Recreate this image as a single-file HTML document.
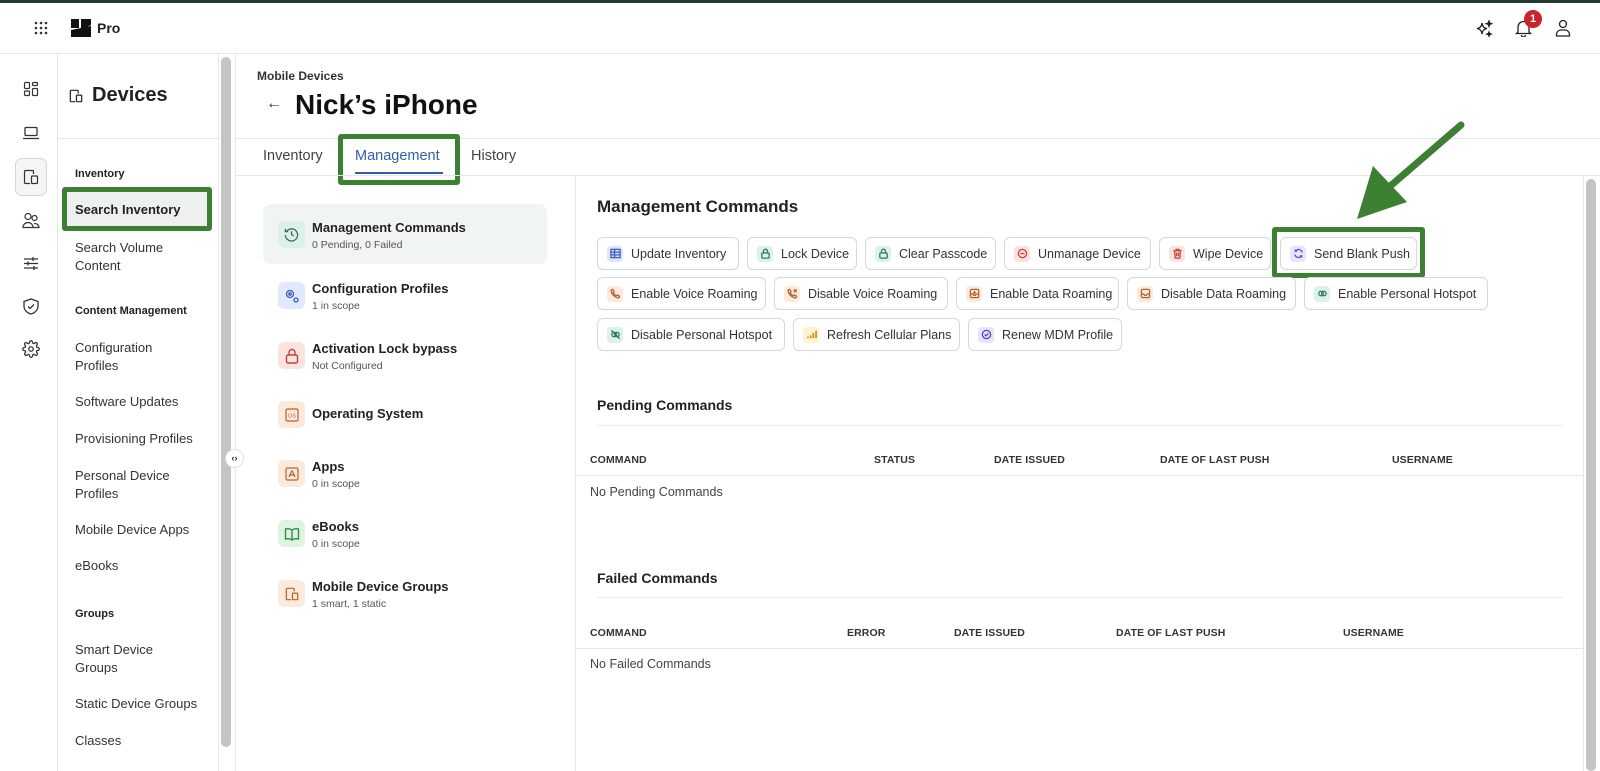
<!DOCTYPE html>
<html><head><meta charset="utf-8"><style>
*{box-sizing:border-box;margin:0;padding:0}
body{width:1600px;height:771px;overflow:hidden;background:#fff;font-family:"Liberation Sans",sans-serif;color:#222;position:relative}
.a{position:absolute;white-space:nowrap}
.hl{position:absolute;height:1px;background:#e6e8e8}
.vl{position:absolute;width:1px;background:#e6e8e8}
.nav{font-size:13px;color:#333}
.sec{font-size:11px;font-weight:bold;color:#222}
.btn{position:absolute;height:33px;border:1px solid #d6d9d9;border-radius:6px;background:#fff;font-size:12.5px;color:#333;display:flex;align-items:center;padding-left:9px;gap:8px;white-space:nowrap}
.ic{width:16px;height:16px;border-radius:4px;display:inline-flex;align-items:center;justify-content:center;flex:none}
.ic svg{width:11px;height:11px;fill:none;stroke-width:1.4}
.th{position:absolute;font-size:10.5px;font-weight:bold;color:#333;letter-spacing:.1px}
.mi{position:absolute;left:278px;width:27px;height:27px;border-radius:6px;display:flex;align-items:center;justify-content:center}
.mt{position:absolute;left:312px;font-size:13px;font-weight:bold;color:#222}
.ms{position:absolute;left:312px;font-size:10.5px;color:#555}
.gb{position:absolute;border:5px solid #3d7f33;border-radius:3px}
.g{background:#dcf1ea;stroke:#2d7a5f}.g svg{stroke:#2d7a5f}
.o{background:#fcebdc}.o svg{stroke:#b8602b}
.r{background:#fbe2e0}.r svg{stroke:#c0443a}
</style></head><body>
<div class="a" style="left:0;top:0;width:1600px;height:3px;background:#223a2f"></div>
<svg class="a" style="left:34px;top:21px" width="14" height="14" viewBox="0 0 14 14" fill="#333"><circle cx="2" cy="2" r="1.3"/><circle cx="7" cy="2" r="1.3"/><circle cx="12" cy="2" r="1.3"/><circle cx="2" cy="7" r="1.3"/><circle cx="7" cy="7" r="1.3"/><circle cx="12" cy="7" r="1.3"/><circle cx="2" cy="12" r="1.3"/><circle cx="7" cy="12" r="1.3"/><circle cx="12" cy="12" r="1.3"/></svg>
<svg class="a" style="left:71px;top:19px" width="20" height="18" viewBox="0 0 20 18"><path d="M0 0H8V9H0Z M10 0H20V6L14 9H10Z M0 18V11L20 7V18Z" fill="#111"/></svg>
<div class="a" style="left:97px;top:20px;font-size:14px;font-weight:bold">Pro</div>
<svg class="a" style="left:1476px;top:20px" width="17" height="17" viewBox="0 0 17 17" fill="none" stroke="#222" stroke-width="1.3"><path d="M6 3 Q6.5 8 11 8.5 Q6.5 9 6 14 Q5.5 9 1 8.5 Q5.5 8 6 3Z"/><path d="M13 1 l0.7 2 2 0.7 -2 0.7 -0.7 2 -0.7 -2 -2 -0.7 2-0.7Z" fill="#222"/><path d="M13 12 l0.6 1.5 1.5 .6 -1.5 .6 -.6 1.5 -.6-1.5 -1.5-.6 1.5-.6Z" fill="#222"/></svg>
<svg class="a" style="left:1515px;top:19px" width="17" height="18" viewBox="0 0 17 18" fill="none" stroke="#222" stroke-width="1.3"><path d="M3 13V8a5.5 5.5 0 0 1 11 0v5l1.5 1.5H1.5Z"/><path d="M6.5 16a2 2 0 0 0 4 0"/></svg>
<div class="a" style="left:1524px;top:10px;width:18px;height:18px;border-radius:9px;background:#c8242b;color:#fff;font-size:11px;font-weight:bold;text-align:center;line-height:18px">1</div>
<svg class="a" style="left:1555px;top:19px" width="16" height="18" viewBox="0 0 16 18" fill="none" stroke="#222" stroke-width="1.3"><circle cx="8" cy="5" r="3.5"/><path d="M1.5 17v-1.5a4.5 4.5 0 0 1 4.5-4.5h4a4.5 4.5 0 0 1 4.5 4.5V17Z"/></svg>
<div class="hl" style="left:0;top:53px;width:1600px"></div>
<div class="vl" style="left:57px;top:53px;height:718px"></div>
<svg class="a" style="left:23px;top:81px" width="16" height="16" viewBox="0 0 16 16" fill="none" stroke="#333" stroke-width="1.2"><rect x="1.5" y="1.5" width="5" height="6" rx="1"/><rect x="9.5" y="1.5" width="5" height="3" rx="1"/><rect x="1.5" y="10" width="5" height="4.5" rx="1"/><rect x="9.5" y="7.5" width="5" height="7" rx="1"/></svg>
<svg class="a" style="left:22px;top:126px" width="18" height="14" viewBox="0 0 18 14" fill="none" stroke="#333" stroke-width="1.3"><rect x="3" y="1.5" width="12" height="8" rx="1"/><path d="M1 12.5h16"/></svg>
<div class="a" style="left:15px;top:158px;width:32px;height:38px;border:1px solid #d3d6d6;border-radius:7px;background:#f4f5f5"></div>
<svg class="a" style="left:23px;top:169px" width="16" height="16" viewBox="0 0 16 16" fill="none" stroke="#333" stroke-width="1.2"><path d="M7 14.5H2.5a1 1 0 0 1-1-1v-11a1 1 0 0 1 1-1h7a1 1 0 0 1 1 1V5"/><rect x="8.5" y="7" width="6" height="7.5" rx="1"/></svg>
<svg class="a" style="left:22px;top:212px" width="18" height="17" viewBox="0 0 18 17" fill="none" stroke="#333" stroke-width="1.2"><circle cx="6" cy="4.5" r="3"/><circle cx="12.5" cy="6" r="2.5"/><path d="M1 15.5a5 5 0 0 1 10 0Z"/><path d="M11 15.5h6a4 4 0 0 0-5-3.8"/></svg>
<svg class="a" style="left:23px;top:256px" width="16" height="15" viewBox="0 0 16 15" fill="none" stroke="#333" stroke-width="1.3"><path d="M1 3h14M1 7.5h14M1 12h14"/><path d="M10 1v4M5 5.5v4M11 10v4"/></svg>
<svg class="a" style="left:23px;top:298px" width="16" height="17" viewBox="0 0 16 17" fill="none" stroke="#333" stroke-width="1.3"><path d="M8 1 15 3.5V8c0 4-3 6.8-7 8C4 14.8 1 12 1 8V3.5Z"/><path d="M5 8.5l2 2 4-4"/></svg>
<svg class="a" style="left:22px;top:340px" width="18" height="18" viewBox="0 0 24 24" fill="none" stroke="#333" stroke-width="1.7"><circle cx="12" cy="12" r="3"/><path d="M19.4 15a1.7 1.7 0 0 0 .3 1.8l.1.1a2 2 0 1 1-2.8 2.8l-.1-.1a1.7 1.7 0 0 0-1.8-.3 1.7 1.7 0 0 0-1 1.5V21a2 2 0 1 1-4 0v-.1a1.7 1.7 0 0 0-1.1-1.5 1.7 1.7 0 0 0-1.8.3l-.1.1a2 2 0 1 1-2.8-2.8l.1-.1a1.7 1.7 0 0 0 .3-1.8 1.7 1.7 0 0 0-1.5-1H3a2 2 0 1 1 0-4h.1a1.7 1.7 0 0 0 1.5-1.1 1.7 1.7 0 0 0-.3-1.8l-.1-.1a2 2 0 1 1 2.8-2.8l.1.1a1.7 1.7 0 0 0 1.8.3H9a1.7 1.7 0 0 0 1-1.5V3a2 2 0 1 1 4 0v.1a1.7 1.7 0 0 0 1 1.5 1.7 1.7 0 0 0 1.8-.3l.1-.1a2 2 0 1 1 2.8 2.8l-.1.1a1.7 1.7 0 0 0-.3 1.8V9a1.7 1.7 0 0 0 1.5 1H21a2 2 0 1 1 0 4h-.1a1.7 1.7 0 0 0-1.5 1z"/></svg>
<div class="vl" style="left:218px;top:53px;height:718px"></div>
<div class="a" style="left:221px;top:57px;width:10px;height:690px;border-radius:5px;background:#c4c4c4"></div>
<div class="vl" style="left:235px;top:53px;height:718px"></div>
<svg class="a" style="left:69px;top:89px" width="14" height="14" viewBox="0 0 16 16" fill="none" stroke="#222" stroke-width="1.4"><path d="M7 14.5H2.5a1 1 0 0 1-1-1v-11a1 1 0 0 1 1-1h7a1 1 0 0 1 1 1V5"/><rect x="8.5" y="7" width="6" height="7.5" rx="1"/></svg>
<div class="a" style="left:92px;top:84px;font-size:20px;font-weight:bold">Devices</div>
<div class="hl" style="left:57px;top:138px;width:161px"></div>
<div class="a sec" style="left:75px;top:168px">Inventory</div>
<div class="gb" style="left:62px;top:187px;width:150px;height:44px"></div>
<div class="a" style="left:67px;top:192px;width:140px;height:34px;background:#eeefef"></div>
<div class="a" style="left:75px;top:202px;font-size:13px;font-weight:bold">Search Inventory</div>
<div class="a nav" style="left:75px;top:239px;line-height:18px">Search Volume<br>Content</div>
<div class="a sec" style="left:75px;top:305px">Content Management</div>
<div class="a nav" style="left:75px;top:339px;line-height:18px">Configuration<br>Profiles</div>
<div class="a nav" style="left:75px;top:394px">Software Updates</div>
<div class="a nav" style="left:75px;top:431px">Provisioning Profiles</div>
<div class="a nav" style="left:75px;top:467px;line-height:18px">Personal Device<br>Profiles</div>
<div class="a nav" style="left:75px;top:522px">Mobile Device Apps</div>
<div class="a nav" style="left:75px;top:558px">eBooks</div>
<div class="a sec" style="left:75px;top:608px">Groups</div>
<div class="a nav" style="left:75px;top:641px;line-height:18px">Smart Device<br>Groups</div>
<div class="a nav" style="left:75px;top:696px">Static Device Groups</div>
<div class="a nav" style="left:75px;top:733px">Classes</div>
<div class="a" style="left:225px;top:449px;width:19px;height:19px;border-radius:10px;background:#fff;border:1px solid #e2e2e2;font-size:9px;text-align:center;line-height:17px;font-weight:bold">‹›</div>
<div class="a" style="left:257px;top:69px;font-size:12px;font-weight:bold;color:#333">Mobile Devices</div>
<div class="a" style="left:266px;top:95px;font-size:16px;color:#333">←</div>
<div class="a" style="left:295px;top:89px;font-size:28px;font-weight:bold;color:#111">Nick’s iPhone</div>
<div class="hl" style="left:235px;top:138px;width:1365px"></div>
<div class="a" style="left:263px;top:148px;font-size:14.5px;color:#444">Inventory</div>
<div class="a" style="left:355px;top:148px;font-size:14.5px;color:#2f5fa8">Management</div>
<div class="a" style="left:355px;top:172px;width:88px;height:2px;background:#2f5fa8"></div>
<div class="a" style="left:471px;top:148px;font-size:14.5px;color:#444">History</div>
<div class="gb" style="left:338px;top:134px;width:122px;height:51px"></div>
<div class="hl" style="left:235px;top:175px;width:1365px"></div>
<div class="vl" style="left:575px;top:175px;height:596px"></div>
<div class="a" style="left:263px;top:204px;width:284px;height:60px;border-radius:8px;background:#f0f5f4"></div>
<div class="mi" style="top:221px;background:#dcefea"><svg width="15" height="15" viewBox="0 0 16 16" fill="none" stroke="#2d6a5a" stroke-width="1.3"><path d="M2.5 5A6.5 6.5 0 1 1 1.5 8.5"/><path d="M1.5 2v3h3"/><path d="M8 4.5V8l2.5 1.5"/></svg></div>
<div class="mt" style="top:220px">Management Commands</div><div class="ms" style="top:239px">0 Pending, 0 Failed</div>
<div class="mi" style="top:282px;background:#e1e9fa"><svg width="16" height="16" viewBox="0 0 16 16" fill="none" stroke="#3a5dbf" stroke-width="1.3"><circle cx="6" cy="6" r="3.5"/><circle cx="6" cy="6" r="1.2"/><circle cx="12" cy="12" r="2"/></svg></div>
<div class="mt" style="top:281px">Configuration Profiles</div><div class="ms" style="top:300px">1 in scope</div>
<div class="mi" style="top:342px;background:#fbe3e1"><svg width="14" height="16" viewBox="0 0 14 16" fill="none" stroke="#c0443a" stroke-width="1.4"><rect x="1.5" y="7" width="11" height="8" rx="1.5"/><path d="M4 7V4.5a3 3 0 0 1 6 0V7"/></svg></div>
<div class="mt" style="top:341px">Activation Lock bypass</div><div class="ms" style="top:360px">Not Configured</div>
<div class="mi" style="top:401px;background:#fcebdc"><svg width="14" height="14" viewBox="0 0 14 14"><rect x="1" y="1" width="12" height="12" rx="1.5" fill="none" stroke="#b8602b" stroke-width="1.2"/><text x="7" y="9.5" font-size="5.5" text-anchor="middle" fill="#b8602b" font-family="Liberation Sans">OS</text></svg></div>
<div class="mt" style="top:406px">Operating System</div>
<div class="mi" style="top:460px;background:#fcebdc"><svg width="14" height="14" viewBox="0 0 14 14" fill="none" stroke="#b8602b" stroke-width="1.2"><rect x="1" y="1" width="12" height="12" rx="1.5"/><path d="M7 3.5 4 10M7 3.5 10 10M4 8h6"/></svg></div>
<div class="mt" style="top:459px">Apps</div><div class="ms" style="top:478px">0 in scope</div>
<div class="mi" style="top:520px;background:#def4e0"><svg width="16" height="14" viewBox="0 0 16 14" fill="none" stroke="#2f8a3e" stroke-width="1.3"><path d="M8 3v10M8 3C6 1.5 3.5 1.5 1.5 2v10c2-.5 4.5-.5 6.5 1 2-1.5 4.5-1.5 6.5-1V2C12.5 1.5 10 1.5 8 3Z"/></svg></div>
<div class="mt" style="top:519px">eBooks</div><div class="ms" style="top:538px">0 in scope</div>
<div class="mi" style="top:580px;background:#fcebdc"><svg width="14" height="14" viewBox="0 0 16 16" fill="none" stroke="#b8602b" stroke-width="1.4"><path d="M7 14.5H2.5a1 1 0 0 1-1-1v-11a1 1 0 0 1 1-1h7a1 1 0 0 1 1 1V5"/><rect x="8.5" y="7" width="6" height="7.5" rx="1"/></svg></div>
<div class="mt" style="top:579px">Mobile Device Groups</div><div class="ms" style="top:598px">1 smart, 1 static</div>
<div class="a" style="left:597px;top:197px;font-size:17px;font-weight:bold;color:#222">Management Commands</div>
<div class="btn" style="left:597px;top:237px;width:142px"><span class="ic" style="background:#dde6fb"><svg viewBox="0 0 12 12" style="stroke:#3a5dbf"><rect x="1" y="1.5" width="10" height="9"/><path d="M1 4.5h10M1 7.5h10M5 1.5v9"/></svg></span>Update Inventory</div>
<div class="btn" style="left:747px;top:237px;width:110px"><span class="ic g"><svg viewBox="0 0 12 12"><rect x="2" y="5.5" width="8" height="5.5" rx="1"/><path d="M3.8 5.5V3.5a2.2 2.2 0 0 1 4.4 0v2"/></svg></span>Lock Device</div>
<div class="btn" style="left:865px;top:237px;width:131px"><span class="ic g"><svg viewBox="0 0 12 12"><rect x="2" y="5.5" width="8" height="5.5" rx="1"/><path d="M3.8 5.5V3.5a2.2 2.2 0 0 1 4.4 0v2"/></svg></span>Clear Passcode</div>
<div class="btn" style="left:1004px;top:237px;width:147px"><span class="ic r"><svg viewBox="0 0 12 12"><circle cx="6" cy="6" r="4.5"/><path d="M3.8 6h4.4"/></svg></span>Unmanage Device</div>
<div class="btn" style="left:1159px;top:237px;width:112px"><span class="ic r"><svg viewBox="0 0 12 12"><path d="M1.5 3h9M4.5 3V1.5h3V3M2.8 3l.7 8h5l.7-8M5 5v4M7 5v4"/></svg></span>Wipe Device</div>
<div class="btn" style="left:1280px;top:237px;width:137px"><span class="ic" style="background:#ebe3fb"><svg viewBox="0 0 12 12" style="stroke:#6c4bc4"><path d="M10 5a4 4 0 0 0-7.3-1.5M2 7a4 4 0 0 0 7.3 1.5M2.5 1.5v2h2M9.5 10.5v-2h-2"/></svg></span>Send Blank Push</div>
<div class="gb" style="left:1272px;top:227px;width:153px;height:51px"></div>
<div class="btn" style="left:597px;top:277px;width:169px"><span class="ic o"><svg viewBox="0 0 12 12"><path d="M3 1.5 4.5 4 3.5 5.2c.8 1.6 1.7 2.5 3.3 3.3L8 7.5l2.5 1.5-.8 1.8C5.5 10.8 1.2 6.5 1.2 2.3Z"/></svg></span>Enable Voice Roaming</div>
<div class="btn" style="left:774px;top:277px;width:174px"><span class="ic o"><svg viewBox="0 0 12 12"><path d="M3 1.5 4.5 4 3.5 5.2c.8 1.6 1.7 2.5 3.3 3.3L8 7.5l2.5 1.5-.8 1.8C5.5 10.8 1.2 6.5 1.2 2.3Z"/><path d="M7.5 1.5l3 3M10.5 1.5l-3 3"/></svg></span>Disable Voice Roaming</div>
<div class="btn" style="left:956px;top:277px;width:163px"><span class="ic o"><svg viewBox="0 0 12 12"><rect x="1.5" y="1.5" width="9" height="9" rx="1.5"/><path d="M1.5 6.5h2.5l1 1.5h2l1-1.5h2.5M6 3v3M4.7 4.8 6 6l1.3-1.2"/></svg></span>Enable Data Roaming</div>
<div class="btn" style="left:1127px;top:277px;width:169px"><span class="ic o"><svg viewBox="0 0 12 12"><rect x="1.5" y="1.5" width="9" height="9" rx="1.5"/><path d="M1.5 6.5h2.5l1 1.5h2l1-1.5h2.5"/></svg></span>Disable Data Roaming</div>
<div class="btn" style="left:1304px;top:277px;width:184px"><span class="ic g"><svg viewBox="0 0 12 12"><circle cx="4.5" cy="6" r="2.5"/><circle cx="7.5" cy="6" r="2.5"/></svg></span>Enable Personal Hotspot</div>
<div class="btn" style="left:597px;top:318px;width:188px"><span class="ic g"><svg viewBox="0 0 12 12"><circle cx="4.5" cy="6" r="2.5"/><circle cx="7.5" cy="6" r="2.5"/><path d="M1.5 1.5l9 9"/></svg></span>Disable Personal Hotspot</div>
<div class="btn" style="left:793px;top:318px;width:167px"><span class="ic" style="background:#fdf2d6"><svg viewBox="0 0 12 12" style="stroke:#c79000;stroke-width:1.8"><path d="M2 10V8.5M5 10V7M8 10V4.5M11 10V2"/></svg></span>Refresh Cellular Plans</div>
<div class="btn" style="left:968px;top:318px;width:154px"><span class="ic" style="background:#e6e3fb"><svg viewBox="0 0 12 12" style="stroke:#4b47b8"><circle cx="6" cy="6" r="4.5"/><path d="M4 6l1.5 1.5L8 4.8"/></svg></span>Renew MDM Profile</div>
<div class="a" style="left:597px;top:397px;font-size:14px;font-weight:bold;color:#222">Pending Commands</div>
<div class="hl" style="left:597px;top:425px;width:966px;background:#eceeee"></div>
<div class="th" style="left:590px;top:454px">COMMAND</div>
<div class="th" style="left:874px;top:454px">STATUS</div>
<div class="th" style="left:994px;top:454px">DATE ISSUED</div>
<div class="th" style="left:1160px;top:454px">DATE OF LAST PUSH</div>
<div class="th" style="left:1392px;top:454px">USERNAME</div>
<div class="hl" style="left:576px;top:475px;width:1008px"></div>
<div class="a" style="left:590px;top:485px;font-size:12.5px;color:#444">No Pending Commands</div>
<div class="a" style="left:597px;top:570px;font-size:14px;font-weight:bold;color:#222">Failed Commands</div>
<div class="hl" style="left:597px;top:597px;width:966px;background:#eceeee"></div>
<div class="th" style="left:590px;top:627px">COMMAND</div>
<div class="th" style="left:847px;top:627px">ERROR</div>
<div class="th" style="left:954px;top:627px">DATE ISSUED</div>
<div class="th" style="left:1116px;top:627px">DATE OF LAST PUSH</div>
<div class="th" style="left:1343px;top:627px">USERNAME</div>
<div class="hl" style="left:576px;top:648px;width:1008px"></div>
<div class="a" style="left:590px;top:657px;font-size:12.5px;color:#444">No Failed Commands</div>
<div class="vl" style="left:1583px;top:175px;height:596px"></div>
<div class="a" style="left:1586px;top:179px;width:10px;height:592px;border-radius:5px;background:#c4c4c4"></div>
<svg class="a" style="left:1340px;top:115px" width="135" height="115" viewBox="0 0 135 115"><path d="M121 10 L48 73" stroke="#3d7f33" stroke-width="7" stroke-linecap="round"/><path d="M17 104 L33 51 L67 87 Z" fill="#3d7f33"/></svg>
</body></html>
